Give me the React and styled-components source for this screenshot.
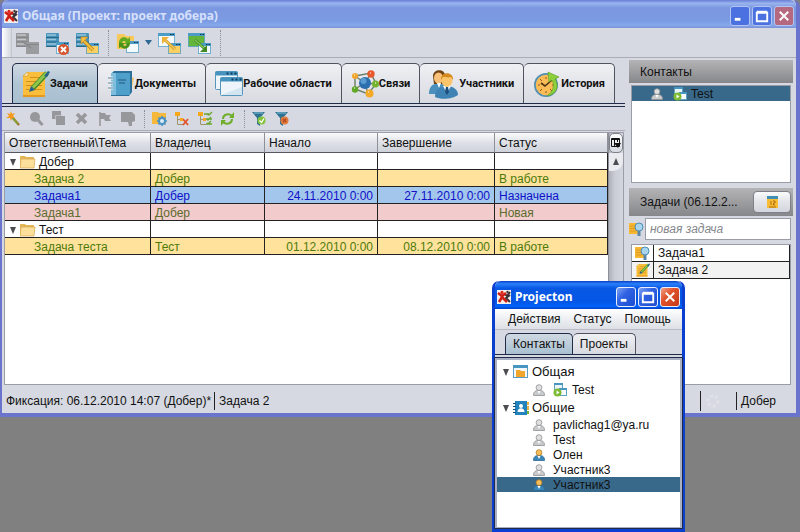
import React from 'react';
import styled, { createGlobalStyle, css } from 'styled-components';

const colors = {
  desktop: '#808080',
  panel: '#d6d9e1',
  line: '#9a9da6',
  navy: '#1f2b47',
  selection: '#39698a',
  yellow: '#ffe29c',
  blue: '#a3c7ec',
  pink: '#f2cccd',
};

/* ---------- icons ---------- */

const Svg = ({ size = 16, box = 24, children }) => (
  <svg width={size} height={size} viewBox={`0 0 ${box} ${box}`} fill="none" aria-hidden="true">
    {children}
  </svg>
);

const Logo = () => (
  <Svg size={14} box={14}>
    <rect width="14" height="14" fill="#f6efec" />
    <path d="M8 4l2 2 3-4M13 12L9 8l4-3" stroke="#3a3338" strokeWidth="2" />
    <path d="M1 3l4 3 4-3M2 12l3-5 5 5M5 6v3" stroke="#cf1f14" strokeWidth="2.6" />
    <circle cx="5" cy="2.4" r="1.6" fill="#e0251a" />
    <circle cx="10.5" cy="2" r="1.2" fill="#3a3338" />
  </Svg>
);

const Database = ({ top = '#4795bd', side = '#2a6785' }) => (
  <>
    <rect y="0" width="13" height="14" rx="1" fill={top} />
    <path d="M0 4.500h13M0 9h13M0 13.500h13" stroke={side} />
    <path d="M1 2h9M1 6.500h9M1 11h9" stroke="#fff" strokeOpacity=".45" strokeWidth="1.400" />
  </>
);

const MiniWindow = ({ x, y, w = 13, h = 11, fill = '#f4f9fc', bar = '#4c9cc6' }) => (
  <>
    <rect x={x + 0.5} y={y + 0.5} width={w - 1} height={h - 1} fill={fill} stroke={bar} strokeOpacity=".75" />
    <rect x={x} y={y} width={w} height="3" fill={bar} />
    <path d={`M${x + w - 5} ${y + 1.5}h1.500m1 0h1.500`} stroke="#123a55" />
  </>
);

const DbCopyIcon = () => (
  <Svg size={24}>
    <Database top="#949598" side="#86878a" />
    <rect x="10" y="9" width="13" height="12" fill="#9b9c9f" />
    <path d="M10 11.500h13" stroke="#85868a" />
    <path d="M6 8l9 7" stroke="#8b8c90" strokeWidth="2" />
  </Svg>
);

const DbDeleteIcon = () => (
  <Svg size={24}>
    <Database />
    <MiniWindow x={10} y={9} h={12} />
    <circle cx="17.500" cy="16.500" r="5.500" fill="#d9532c" />
    <path d="M15 14l5 5m0-5l-5 5" stroke="#fff" strokeWidth="2" />
  </Svg>
);

const DbImportIcon = () => (
  <Svg size={24}>
    <Database />
    <MiniWindow x={10} y={10} fill="#f8cf62" />
    <path d="M17 17L7 7" stroke="#b98520" strokeWidth="3.400" />
    <path d="M17 17L7 7" stroke="#f4bd3c" strokeWidth="2" />
    <path d="M5 4h7l-7 7z" fill="#f4bd3c" stroke="#b98520" strokeWidth=".6" />
  </Svg>
);

const RefreshWindowIcon = () => (
  <Svg size={24}>
    <path d="M0 1h7l2 2h8v13H0z" fill="#f6c95a" />
    <MiniWindow x={9} y={8} h={12} />
    <path d="M2 10c0-6 6-7 9-4l2-2v7H7l2-2c-2-2-4-1-4 2z" fill="#61ab22" />
    <path d="M13 10c0 6-6 7-9 4l-2 1v-5h6l-2 2c2 2 4 1 4-2z" fill="#4b9218" />
  </Svg>
);

const WindowPairIcon = ({ green }) => (
  <Svg size={24}>
    <MiniWindow x={0} y={0} w={17} h={14} fill={green ? '#63b53b' : '#f4f9fc'} />
    <MiniWindow x={10} y={10} fill={green ? '#f4f9fc' : '#f8cf62'} />
    <path d="M7 7l10 9" stroke={green ? '#3f8a22' : '#c79022'} strokeWidth="3" />
    <path d="M7 7l10 9" stroke={green ? '#7cc455' : '#f6c95a'} strokeWidth="1.600" />
    <path d={green ? 'M19 19v-7l-7 7z' : 'M4 4h7l-7 7z'} fill={green ? '#3f8a22' : '#eeb236'} />
  </Svg>
);

const TaskIcon = ({ size = 28 }) => (
  <Svg size={size} box={28}>
    <path d="M5 2h18v25H1V6z" fill="#f9be3b" />
    <path d="M1 6h5V2z" fill="#fff0c2" stroke="#d89518" strokeWidth=".6" />
    <path d="M1 26h22" stroke="#e59a1c" strokeWidth="2" />
    <path d="M8 7.500h12M4 11.500h16M4 15.500h16M4 19.500h16" stroke="#cf9020" strokeWidth="1.200" />
    <path d="M25 3L11 18" stroke="#3f8a2c" strokeWidth="5" />
    <path d="M25 2.500L11 17.500" stroke="#8fc74a" strokeWidth="3" />
    <path d="M22 6l4-5 2 1-3 5z" fill="#28628a" />
    <path d="M9 16l4 4-6 2z" fill="#28628a" />
  </Svg>
);

const NotebookIcon = ({ size = 28 }) => (
  <Svg size={size} box={28}>
    <path d="M23 6l4 2-3 15h-3z" fill="#f3c775" />
    <path d="M4 4l3-3h18v21l-3 4H4z" fill="#2c6f9b" />
    <rect x="4" y="3" width="19" height="22" fill="#4f9fcb" />
    <path d="M4 3h5v22H4z" fill="#7dbddd" />
    <path d="M11 10h8M12 13h6" stroke="#225b80" strokeWidth="1.200" />
    <path d="M1 8h5M1 13h5M1 18h5" stroke="#eef6fb" strokeWidth="3" />
    <path d="M1 8h5M1 13h5M1 18h5" stroke="#5b7890" strokeWidth="1.200" />
  </Svg>
);

const WindowsIcon = () => (
  <Svg size={28} box={28}>
    {[[0.500, 1.500], [5.500, 7.500]].map(([x, y]) => (
      <g key={x}>
        <rect x={x} y={y} width="22" height="18" rx="1" fill="#edf5fa" stroke="#5795bb" />
        <rect x={x} y={y} width="22" height="4" rx="1" fill="#4593be" />
        <path d={`M${x + 11} ${y + 2}h2m2 0h2m2 0h2`} stroke="#123f60" strokeWidth="2" />
      </g>
    ))}
    <path d="M6 25l21-8v8z" fill="#d2e5f0" />
  </Svg>
);

const LinksIcon = () => (
  <Svg size={28} box={28}>
    <path d="M4 6l16-3 5 11-8 10L4 19zM4 6l10 7 6-10M4 19l10-6 11 1M17 24l-3-11" stroke="#6b7f68" strokeWidth="1.400" />
    <circle cx="14" cy="13" r="6" fill="#2b6fae" />
    <circle cx="12.500" cy="11" r="3" fill="#5b9dd2" />
    <circle cx="4" cy="6" r="3" fill="#f2a62b" />
    <circle cx="20" cy="4" r="3.700" fill="#e85a2d" />
    <circle cx="24.500" cy="14" r="3.500" fill="#74b32d" />
    <circle cx="4" cy="19.500" r="3.200" fill="#62a827" />
    <circle cx="18.500" cy="23.500" r="4" fill="#f4a927" />
    <path d="M3 5h1m15-2h1m4 10h1m-22 5h1m13 4h1" stroke="#fff" strokeWidth="1.400" strokeOpacity=".7" />
  </Svg>
);

const PeopleIcon = () => (
  <Svg size={30} box={30}>
    <path d="M0 25c0-7 3-10 9-11 7 0 9 4 9 11z" fill="#4b8fbd" />
    <path d="M4 7c0-7 12-8 12 0v8H5z" fill="#714313" />
    <ellipse cx="9.500" cy="9" rx="4.500" ry="5.500" fill="#f8c078" />
    <path d="M8 14l2 5 2-5z" fill="#fff" />
    <path d="M6 28c0-7 4-10 11-11 8 0 12 4 12 9-5 4-17 5-23 2z" fill="#3e83b4" />
    <path d="M14 17l4 7 4-7z" fill="#f2f7fb" />
    <path d="M17 18h2l1 5-2 3-2-3z" fill="#1e4f7c" />
    <ellipse cx="18" cy="11.500" rx="5.500" ry="6.500" fill="#fcc56c" />
    <path d="M12 11c-1-9 13-9 12 0l-2-3c-3 1-6 0-8 0z" fill="#d58a1e" />
  </Svg>
);

const HistoryIcon = () => (
  <Svg size={28} box={28}>
    <circle cx="13" cy="15" r="12" fill="#4f90b3" />
    <circle cx="13" cy="15" r="10.300" fill="#fbbc58" />
    <path d="M13 7v2m0 12v2M5 15h2m12 0h2M7 9l2 2m8 8l2 2M7 21l2-2" stroke="#8b5a17" />
    <path d="M19 10l-7 6-4-3" stroke="#4c3514" strokeWidth="1.600" />
    <path d="M14 26c11-2 12-11 8-17l4-2-11-5 1 10 3-2c3 5 1 12-5 16z" fill="#8dd03c" stroke="#5d9c20" strokeWidth=".6" />
  </Svg>
);

const WandIcon = () => (
  <Svg box={16}>
    <path d="M6 6l7 8" stroke="#9b6d24" strokeWidth="2.400" />
    <path d="M6 6l6 7" stroke="#7fb135" strokeWidth="1.200" />
    <path d="M5 0l1 3 3-1-2 3 2 2-3 0-1 3-1-3-4 0 3-2-2-3 3 1z" fill="#f59a1d" />
  </Svg>
);

const gray = '#97989c';

const MagnifierIcon = () => (
  <Svg box={16}>
    <circle cx="6" cy="6" r="5" fill={gray} />
    <path d="M9 9l4.500 5" stroke={gray} strokeWidth="3" />
  </Svg>
);

const CopyIcon = () => (
  <Svg box={16}>
    <path d="M0 0h9v8H0zM4 5h9v9H4z" fill={gray} />
    <path d="M3.500 8.500v-4h6" stroke="#b9bbc0" />
  </Svg>
);

const CrossIcon = () => (
  <Svg box={16}>
    <path d="M2 3l9 9m0-9l-9 9" stroke={gray} strokeWidth="3.600" />
  </Svg>
);

const FlagIcon = () => (
  <Svg box={16}>
    <path d="M2 1v14" stroke={gray} strokeWidth="1.600" />
    <path d="M2 2h5l1 2h5l-2 3 2 3H7L6 8H2z" fill={gray} />
  </Svg>
);

const CommentIcon = () => (
  <Svg box={16}>
    <path d="M0 1h11l3 3v6l-3 1v4H8l-1-4H0z" fill={gray} />
  </Svg>
);

const FolderGearIcon = () => (
  <Svg box={16}>
    <path d="M0 1h6l1 1h7v11H0z" fill="#f5b83b" />
    <circle cx="10" cy="10" r="3" stroke="#4a93c4" strokeWidth="2" fill="#dcecf6" />
    <path d="M10 5v2m0 6v2m-5-5h2m6 0h2M6.500 6.500l1 1m6-1l-1 1m-6 6l1-1m6 1l-1-1" stroke="#4a93c4" strokeWidth="1.600" />
  </Svg>
);

const TreeIcon = ({ check }) => (
  <Svg box={16}>
    <rect x="0" y="1" width="5" height="4" fill="#f5a81c" />
    <path d="M2.500 5v8.500H8M2.500 8.500H7" stroke="#a0956a" />
    {check ? (
      <path d="M6 3h5M8 8h6M8 13h6M9 3l2 1 3-3M9 8l1 1 3-3M9 12l1 1 3-3" stroke="#6aa52c" strokeWidth="1.400" />
    ) : (
      <path d="M8 8l5 6m0-6l-5 6" stroke="#e2542d" strokeWidth="1.800" />
    )}
    <rect x="5" y="7" width="3" height="3" fill="#f5a81c" />
  </Svg>
);

const RefreshIcon = () => (
  <Svg box={16}>
    <path d="M2 8c0-5 6-6 9-3M11 8c0 5-6 6-9 3" stroke="#6fae2b" strokeWidth="2" />
    <path d="M13 1v6H8zM0 15V9h5z" fill="#6fae2b" />
  </Svg>
);

const FilterIcon = ({ off }) => (
  <Svg box={16}>
    <path d="M0 1h13L8 7v8l-3-2V7z" fill="#2f7394" />
    <path d="M2 2h9" stroke="#86bfd4" />
    <circle cx="9.500" cy="9.500" r="4" fill={off ? '#e07a3c' : '#83c23a'} />
    <path d={off ? 'M8 8l3 3m0-3l-3 3' : 'M7.500 9.500l2 2 2.500-4'} stroke={off ? '#b04a24' : '#fff'} strokeWidth="1.300" />
  </Svg>
);

const FolderIcon = () => (
  <Svg size={16} box={16}>
    <path d="M0 2h5l1 1h8v11H0z" fill="#e4b65a" />
    <path d="M0 14l1-9h14l-1 9z" fill="#fbdf9b" stroke="#d8a84d" strokeWidth=".7" />
  </Svg>
);

const WindowFolderIcon = () => (
  <Svg box={16}>
    <rect x=".5" y="1.500" width="14" height="12" fill="#f2f8fb" stroke="#5b9dc2" />
    <path d="M0 1h15v3H0z" fill="#4796c1" />
    <path d="M3 6h4l1 1h4v6H3z" fill="#f2a62b" />
  </Svg>
);

const AddressBookIcon = () => (
  <Svg box={16}>
    <rect x="2" y="1" width="12" height="14" fill="#2384bd" />
    <path d="M14 2h2v3h-2zM14 6h2v4h-2z" fill="#e8b24a" />
    <path d="M14 11h2v3h-2z" fill="#74b32d" />
    <path d="M0 3.500h3M0 6.500h3M0 9.500h3M0 12.500h3" stroke="#174f77" />
    <circle cx="8" cy="6" r="2" fill="#fff" />
    <path d="M4.500 12c0-5 7-5 7 0z" fill="#fff" />
  </Svg>
);

const PersonIcon = ({ active }) => (
  <Svg size={12} box={12}>
    <path d="M.5 11.500c0-4 2-5 5.500-5s5.500 1 5.500 5z" fill={active ? '#3b86b8' : '#c9cacc'} stroke={active ? '#2b6894' : '#8f9194'} strokeWidth=".8" />
    <path d="M4.500 7L6 10l1.500-3z" fill="#fff" />
    <circle cx="6" cy="3.600" r="2.900" fill={active ? '#f6bd5c' : '#e0e0e1'} stroke={active ? '#b17c1f' : '#8f9194'} strokeWidth=".8" />
  </Svg>
);

const WindowPlayIcon = () => (
  <Svg size={14} box={14}>
    <rect x="1.500" y=".5" width="8" height="8" fill="#e9f4f9" stroke="#5fa3c2" />
    <path d="M1 0h9v2H1z" fill="#4796c1" />
    <rect x="6.500" y="5.500" width="7" height="7" fill="#f8fcfe" stroke="#5fa3c2" />
    <path d="M6 5h8v2H6z" fill="#4796c1" />
    <circle cx="4.500" cy="9.500" r="4" fill="#7dbb35" />
    <path d="M3.500 7.500v4l3-2z" fill="#fff" />
  </Svg>
);

const IdeaIcon = () => (
  <Svg box={16}>
    <path d="M0 2h11v11H0z" fill="#f7b731" />
    <path d="M1 5h6M1 7.500h6M1 10h6" stroke="#d99a28" />
    <circle cx="10" cy="6" r="4" fill="#a8d4ec" stroke="#4c8eb5" />
    <path d="M8.500 10h3v5h-3z" fill="#5b86a5" />
  </Svg>
);

const CalendarIcon = () => (
  <Svg size={13} box={13}>
    <rect x="1" y="1" width="11" height="11" fill="#f9bd35" />
    <path d="M1 0h11v3H1z" fill="#3f8fb5" />
    <path d="M5 5v4M7 5h2v2H7.500v2H9M3 11h7" stroke="#b06a10" />
  </Svg>
);

const ColumnsIcon = () => (
  <Svg size={12} box={12}>
    <path d="M1.500 1.500h8v8h-8zM4.500 1v8M7.500 1v4M1 2.500h8" stroke="#111" />
    <path d="M4 6h7l-3 5z" fill="#111" />
  </Svg>
);

const Triangle = ({ up }) => (
  <Svg size={8} box={8}>
    <path d={up ? 'M1 7h6L4 0z' : 'M1 1h6L4 8z'} fill="#4b4d50" />
  </Svg>
);

const Throbber = () => (
  <Svg size={16} box={16}>
    <circle cx="8" cy="8" r="5" stroke="#dfe1e6" strokeWidth="3" strokeDasharray="3 2" />
  </Svg>
);

/* ---------- window frame ---------- */

const controlGlyphs = {
  min: 'M4 13h6',
  max: 'M4 6h11v9H4zM4 5h11',
  close: 'M5 5l9 9m0-9l-9 9',
};

const TitleBar = ({ title, inactive }) => (
  <Caption $inactive={inactive}>
    <Logo />
    <h1>{title}</h1>
    {['min', 'max', 'close'].map((kind) => (
      <FrameButton key={kind} type="button" aria-label={kind} $close={kind === 'close'} $inactive={inactive}>
        <Svg size={18} box={19}>
          <path d={controlGlyphs[kind]} stroke="#fff" strokeWidth={kind === 'min' ? 3 : 2} />
        </Svg>
      </FrameButton>
    ))}
  </Caption>
);

/* ---------- data ---------- */

const tabs = [
  { label: 'Задачи', Icon: TaskIcon },
  { label: 'Документы', Icon: NotebookIcon },
  { label: 'Рабочие области', Icon: WindowsIcon },
  { label: 'Связи', Icon: LinksIcon },
  { label: 'Участники', Icon: PeopleIcon },
  { label: 'История', Icon: HistoryIcon },
];

const rows = [
  { group: 'Добер' },
  { topic: 'Задача 2', owner: 'Добер', status: 'В работе', tone: 'yellow' },
  { topic: 'Задача1', owner: 'Добер', start: '24.11.2010 0:00', end: '27.11.2010 0:00', status: 'Назначена', tone: 'blue' },
  { topic: 'Задача1', owner: 'Добер', status: 'Новая', tone: 'pink' },
  { group: 'Тест' },
  { topic: 'Задача теста', owner: 'Тест', start: '01.12.2010 0:00', end: '08.12.2010 0:00', status: 'В работе', tone: 'yellow' },
];

const members = [
  { name: 'pavlichag1@ya.ru' },
  { name: 'Test' },
  { name: 'Олен', active: true },
  { name: 'Участник3' },
  { name: 'Участник3', active: true, selected: true },
];

const App = () => (
  <Desktop>
    <GlobalStyle />
    <MainWindow>
      <TitleBar title="Общая (Проект: проект добера)" inactive />
      <MainToolbar>
        <Grip />
        <ToolButton type="button" aria-label="Копировать базу"><DbCopyIcon /></ToolButton>
        <ToolButton type="button" aria-label="Удалить базу"><DbDeleteIcon /></ToolButton>
        <ToolButton type="button" aria-label="Импорт"><DbImportIcon /></ToolButton>
        <Dots />
        <ToolButton type="button" aria-label="Обновить"><RefreshWindowIcon /></ToolButton>
        <DropButton type="button" aria-label="Ещё">
          <svg width="7" height="5" aria-hidden="true"><path d="M0 0h7L3.500 5z" fill="#2f6a94" /></svg>
        </DropButton>
        <ToolButton type="button" aria-label="Загрузить окно"><WindowPairIcon /></ToolButton>
        <ToolButton type="button" aria-label="Сохранить окно"><WindowPairIcon green /></ToolButton>
        <Dots />
      </MainToolbar>

      <Content>
        <Work>
          <TabStrip role="tablist">
            {tabs.map(({ label, Icon }, i) => (
              <Tab key={label} type="button" role="tab" aria-selected={i === 0} $active={i === 0}>
                <Icon />
                {label}
              </Tab>
            ))}
          </TabStrip>
          <TaskToolbar>
            <SmallTool type="button" aria-label="Создать"><WandIcon /></SmallTool>
            <SmallTool type="button" aria-label="Найти"><MagnifierIcon /></SmallTool>
            <SmallTool type="button" aria-label="Копировать"><CopyIcon /></SmallTool>
            <SmallTool type="button" aria-label="Удалить"><CrossIcon /></SmallTool>
            <SmallTool type="button" aria-label="Флаг"><FlagIcon /></SmallTool>
            <SmallTool type="button" aria-label="Комментарий"><CommentIcon /></SmallTool>
            <Dots $small />
            <SmallTool type="button" aria-label="Папка"><FolderGearIcon /></SmallTool>
            <SmallTool type="button" aria-label="Свернуть"><TreeIcon /></SmallTool>
            <SmallTool type="button" aria-label="Развернуть"><TreeIcon check /></SmallTool>
            <SmallTool type="button" aria-label="Обновить"><RefreshIcon /></SmallTool>
            <Dots $small />
            <SmallTool type="button" aria-label="Фильтр"><FilterIcon /></SmallTool>
            <SmallTool type="button" aria-label="Сбросить фильтр"><FilterIcon off /></SmallTool>
          </TaskToolbar>
          <TablePane>
            <TableArea>
              <TaskTable>
                <colgroup>
                  <col width="146" />
                  <col width="114" />
                  <col width="113" />
                  <col width="117" />
                  <col />
                </colgroup>
                <thead>
                  <tr>
                    <th>Ответственный\Тема</th>
                    <th>Владелец</th>
                    <th>Начало</th>
                    <th>Завершение</th>
                    <th>Статус</th>
                  </tr>
                </thead>
                <tbody>
                  {rows.map((row, i) => (
                    <TaskRow key={i} $tone={row.tone}>
                      <td>
                        {row.group ? (
                          <GroupName><Triangle /><FolderIcon />{row.group}</GroupName>
                        ) : (
                          <TopicName>{row.topic}</TopicName>
                        )}
                      </td>
                      <td>{row.owner}</td>
                      <DateCell>{row.start}</DateCell>
                      <DateCell>{row.end}</DateCell>
                      <td>{row.status}</td>
                    </TaskRow>
                  ))}
                </tbody>
              </TaskTable>
            </TableArea>
            <Scrollbar>
              <ColumnButton type="button" aria-label="Столбцы"><ColumnsIcon /></ColumnButton>
              <ScrollUp type="button" aria-label="Вверх"><Triangle up /></ScrollUp>
            </Scrollbar>
          </TablePane>
        </Work>

        <Side>
          <SideHeader>Контакты</SideHeader>
          <ContactList>
            <ContactItem><PersonIcon /><WindowPlayIcon />Test</ContactItem>
          </ContactList>
          <SideHeader $tall>
            <span>Задачи (06.12.2...</span>
            <CalendarButton type="button" aria-label="Календарь"><CalendarIcon /></CalendarButton>
          </SideHeader>
          <NewTask>
            <IdeaIcon />
            <input type="text" placeholder="новая задача" aria-label="новая задача" />
          </NewTask>
          <TaskList>
            <li><span><IdeaIcon /></span>Задача1</li>
            <li><span><TaskIcon size={14} /></span>Задача 2</li>
          </TaskList>
        </Side>
      </Content>

      <StatusBar>
        <span>Фиксация: 06.12.2010 14:07 (Добер)*</span>
        <StatusCell $grow>Задача 2</StatusCell>
        <StatusCell><Throbber /></StatusCell>
        <StatusCell $last>Добер</StatusCell>
      </StatusBar>
    </MainWindow>

    <ContactWindow>
      <TitleBar title="Projecton" />
      <MenuBar>
        <button type="button">Действия</button>
        <button type="button">Статус</button>
        <button type="button">Помощь</button>
      </MenuBar>
      <SmallTabs role="tablist">
        <SmallTab type="button" role="tab" aria-selected $active>Контакты</SmallTab>
        <SmallTab type="button" role="tab" aria-selected={false}>Проекты</SmallTab>
      </SmallTabs>
      <Tree>
        <TreeGroup><Triangle /><WindowFolderIcon />Общая</TreeGroup>
        <TreeItem $tall><PersonIcon /><WindowPlayIcon />Test</TreeItem>
        <TreeGroup><Triangle /><AddressBookIcon />Общие</TreeGroup>
        {members.map(({ name, active, selected }, i) => (
          <TreeItem key={i} $selected={selected}>
            <PersonIcon active={active} />
            {name}
          </TreeItem>
        ))}
      </Tree>
    </ContactWindow>
  </Desktop>
);

export default App;

/* ---------- styles ---------- */

const GlobalStyle = createGlobalStyle`
  * {
    box-sizing: border-box;
  }

  body {
    margin: 0;
    background: ${colors.desktop};
    color: #111;
    font: 12px/14px 'Liberation Sans', Arial, sans-serif;
  }

  button, input {
    margin: 0;
    padding: 0;
    color: inherit;
    font: inherit;
  }

  button {
    border: 0;
    background: none;
  }

  ul {
    margin: 0;
    padding: 0;
    list-style: none;
  }

  svg {
    display: block;
    flex: none;
  }
`;

const Desktop = styled.div`
  position: relative;
  min-height: 100vh;
  background: ${colors.desktop};
`;

const MainWindow = styled.section`
  display: flex;
  flex-direction: column;
  min-height: calc(100vh - 115px);
  border: solid #6b74cc;
  border-width: 0 4px 4px 2px;
  border-radius: 7px 7px 0 0;
  background: ${colors.panel};
`;

const Caption = styled.header`
  display: flex;
  align-items: center;
  gap: 2px;
  height: 28px;
  padding: 4px 2px 0;
  border-radius: 6px 6px 0 0;
  color: #fff;
  background: linear-gradient(#0a3ec4, #2a80fa 10%, #0958e4 25%, #0356e6 75%, #0263fb 90%, #0344c8);

  h1 {
    flex: 1;
    margin: 0 0 0 2px;
    font: bold 12px/16px 'Noto Sans', sans-serif;
  }

  ${({ $inactive }) =>
    $inactive &&
    css`
      color: #d6e0fa;
      background: linear-gradient(#6a7fd8, #9ab4ee 12%, #7b97e0 28%, #7b9be3 75%, #86a9ea 90%, #7b90d8);
    `}
`;

const FrameButton = styled.button`
  display: grid;
  place-items: center;
  width: 20px;
  height: 20px;
  border: 1px solid #e8eefc;
  border-radius: 3px;
  background: ${({ $close }) =>
    $close ? 'linear-gradient(135deg, #f0a088, #e0512c 40%, #c53a18)' : 'linear-gradient(135deg, #7fa3f4, #2f62e2 40%, #1d4bd0)'};

  ${({ $inactive, $close }) =>
    $inactive &&
    css`
      border-color: #b4c5f3;
      background: ${$close ? '#b5697e' : '#4a71df'};
    `}
`;

const MainToolbar = styled.div`
  display: flex;
  align-items: center;
  gap: 6px;
  height: 30px;
  border-bottom: 1px solid #a9acb5;
`;

const Grip = styled.div`
  width: 10px;
  height: 100%;
  margin-right: -2px;
  border-right: 1px solid #c3c6cf;
  background: linear-gradient(90deg, #fff, #d3d6de);
`;

const ToolButton = styled.button`
  display: grid;
  place-items: end;
  width: 24px;
  height: 24px;
  padding-top: 2px;
`;

const DropButton = styled.button`
  margin-left: -2px;
`;

const Dots = styled.div`
  align-self: center;
  width: 1px;
  height: ${({ $small }) => ($small ? 18 : 26)}px;
  margin: 0 ${({ $small }) => ($small ? 0 : 2)}px;
  border-left: 1px dotted #8b8e97;
`;

const Content = styled.div`
  display: grid;
  grid-template-columns: minmax(0, 1fr) 164px;
  flex: 1;
  gap: 4px;
  padding-right: 3px;
`;

const Work = styled.main`
  display: flex;
  flex-direction: column;
  min-width: 0;
`;

const TabStrip = styled.div`
  display: flex;
  padding: 5px 10px 0;
  border-bottom: 1px solid ${colors.navy};
`;

const Tab = styled.button`
  display: flex;
  align-items: center;
  height: 40px;
  padding: 0 9px;
  border: 1px solid #50545f;
  border-left-width: 0;
  border-bottom: 0;
  border-radius: 5px 5px 0 0;
  background: linear-gradient(#eff0f3, #e3e5ea 50%, #d8dae1);
  font: bold 11px/14px Roboto, sans-serif;
  white-space: nowrap;

  &:first-child {
    border-left-width: 1px;
  }

  ${({ $active }) =>
    $active &&
    css`
      border-color: ${colors.navy};
      background: linear-gradient(#cfd9e2, #b0c5d4 50%, #a9c0d1);
    `}
`;

const TaskToolbar = styled.div`
  display: flex;
  align-items: center;
  gap: 7px;
  height: 25px;
  margin-top: 2px;
  padding: 0 4px;
  border-top: 1px solid ${colors.navy};
  border-bottom: 1px solid #a9acb5;
`;

const SmallTool = styled.button`
  width: 16px;
  height: 16px;
`;

const TablePane = styled.div`
  display: flex;
  flex: 1;
  margin: 1px 1px 0 2px;
  border: 1px solid ${colors.line};
  background: #fff;
`;

const TableArea = styled.div`
  flex: 1;
  min-width: 0;
`;

const TaskTable = styled.table`
  width: 100%;
  table-layout: fixed;
  border-spacing: 0;

  th {
    height: 20px;
    padding: 0 4px;
    border-right: 1px solid #8d9098;
    border-bottom: 1px solid #55585f;
    background: linear-gradient(#fbfbfc, #dfe1e7 50%, #cfd2da);
    font-weight: normal;
    text-align: left;
    white-space: nowrap;
  }

  td {
    height: 17px;
    padding: 2px 4px 0;
    border-right: 1px solid #222;
    border-bottom: 1px solid #222;
    white-space: nowrap;
  }
`;

const TaskRow = styled.tr`
  color: ${({ $tone }) => ({ blue: '#1010c8', pink: '#5b6b2c', yellow: '#4c7a0a' })[$tone] || '#111'};
  background: ${({ $tone }) => colors[$tone] || '#fff'};
`;

const DateCell = styled.td`
  text-align: right;
`;

const GroupName = styled.div`
  display: flex;
  align-items: center;
  gap: 3px;
  height: 14px;
`;

const TopicName = styled.div`
  padding-left: 25px;
`;

const Scrollbar = styled.div`
  display: flex;
  flex-direction: column;
  width: 15px;
  border-left: 1px solid #8d9098;
  background: linear-gradient(90deg, #aeb1ba, #c9ccd4 40%, #d4d7de);
`;

const ColumnButton = styled.button`
  display: grid;
  place-items: center;
  height: 20px;
  border: 1px solid #7d8088;
  border-radius: 5px;
  background: linear-gradient(#fff, #d5d8df);
`;

const ScrollUp = styled.button`
  display: grid;
  place-items: center;
  height: 18px;
  border-radius: 0 0 10px 0;
  background: #e9ebef;
`;

const Side = styled.aside`
  display: flex;
  flex-direction: column;
  padding-top: 2px;
`;

const SideHeader = styled.div`
  display: flex;
  align-items: center;
  justify-content: space-between;
  height: ${({ $tall }) => ($tall ? 28 : 23)}px;
  padding: 0 2px 0 11px;
  background: linear-gradient(#b4b4b6, #86878a);
`;

const ContactList = styled.ul`
  height: 98px;
  margin: 2px 2px 5px;
  border: 1px solid ${colors.line};
  background: #fff;
`;

const ContactItem = styled.li`
  display: flex;
  align-items: center;
  gap: 8px;
  height: 15px;
  padding-left: 19px;
  background: ${colors.selection};

  svg + svg {
    margin-right: -4px;
    margin-left: 2px;
  }
`;

const CalendarButton = styled.button`
  display: grid;
  place-items: center;
  width: 38px;
  height: 22px;
  border: 1px solid #7d8088;
  border-radius: 4px;
  background: linear-gradient(#fbfbfc, #e2e4e9 50%, #d3d6de);
`;

const NewTask = styled.div`
  display: flex;
  align-items: center;
  margin: 2px 2px 4px 0;

  input {
    flex: 1;
    min-width: 0;
    height: 22px;
    padding: 0 4px;
    border: 1px solid ${colors.line};
    background: #fff;
    font-style: italic;
  }

  input::placeholder {
    color: #85878c;
    opacity: 1;
  }
`;

const TaskList = styled.ul`
  flex: 1;
  margin: 0 2px;
  border: 1px solid ${colors.line};
  background: #fff;

  li {
    display: flex;
    align-items: center;
    gap: 4px;
    height: 17px;
    border-right: 1px solid #222;
    border-bottom: 1px solid #222;
  }

  li:nth-child(even) {
    background: #f2f2f2;
  }

  span {
    display: grid;
    place-items: center;
    width: 22px;
    height: 100%;
    border-right: 1px solid #222;
  }
`;

const StatusBar = styled.footer`
  display: flex;
  align-items: center;
  gap: 3px;
  height: 28px;
  padding: 4px 0 0 4px;
`;

const StatusCell = styled.span`
  flex: ${({ $grow }) => ($grow ? 1 : 'none')};
  padding: 2px ${({ $last }) => ($last ? 20 : 12)}px 2px 4px;
  border-left: 1px solid #222;
`;

const ContactWindow = styled.section`
  position: absolute;
  top: 281px;
  bottom: 0;
  left: 492px;
  display: flex;
  flex-direction: column;
  width: 193px;
  border: solid #0b3fd0;
  border-width: 0 3px 4px;
  border-radius: 7px 7px 0 0;
  background: ${colors.panel};
`;

const MenuBar = styled.nav`
  display: flex;
  align-items: center;
  gap: 13px;
  height: 21px;
  padding: 0 13px;
  border-bottom: 1px solid #b9bcc5;
  background: linear-gradient(#fff, #dcdfe5);
`;

const SmallTabs = styled.div`
  display: flex;
  padding: 3px 10px 0;
  border-bottom: 1px solid ${colors.navy};
`;

const SmallTab = styled.button`
  height: 21px;
  padding: 0 7px;
  border: 1px solid #50545f;
  border-bottom: 0;
  border-radius: 5px 5px 0 0;
  background: linear-gradient(#eff0f3, #d8dae1);

  & + & {
    border-left: 0;
  }

  ${({ $active }) =>
    $active &&
    css`
      border-color: ${colors.navy};
      background: linear-gradient(#cfd9e2, #a9c0d1);
    `}
`;

const Tree = styled.ul`
  flex: 1;
  margin-top: 3px;
  padding-top: 3px;
  border: solid #a9b0c4;
  border-width: 2px 2px 1px;
  outline: 1px solid ${colors.navy};
  background: #fff;
`;

const TreeGroup = styled.li`
  display: flex;
  align-items: center;
  gap: 3px;
  height: 18px;
  padding-left: 5px;
  font-size: 13px;
`;

const TreeItem = styled.li`
  display: flex;
  align-items: center;
  gap: 8px;
  height: ${({ $tall }) => ($tall ? 18 : 15)}px;
  padding-left: 36px;
  background: ${({ $selected }) => ($selected ? colors.selection : 'none')};

  svg + svg {
    margin-right: -3px;
  }
`;
